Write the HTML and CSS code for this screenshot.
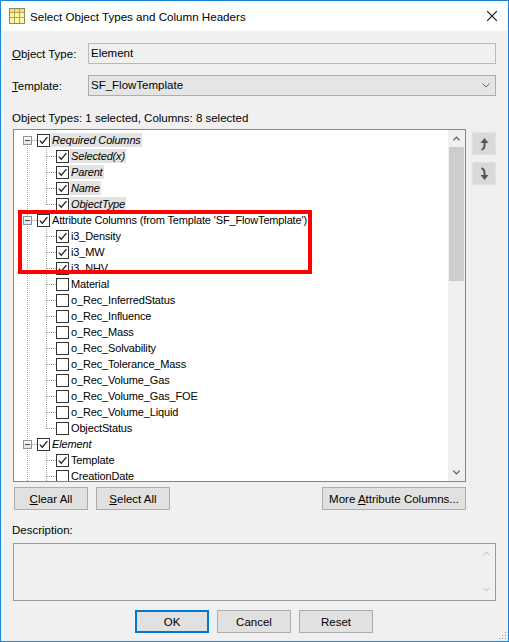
FILE: index.html
```html
<!DOCTYPE html>
<html>

<head>
    <title>Select Object Types and Column Headers</title>
    <link rel="stylesheet" href="styles.css">
</head>

<body>

    <svg class="defs" width="0" height="0">
        <symbol id="tick" viewBox="0 0 11 11">
            <path d="M1.8 5.6 L4.3 8.2 L9.4 2.2" fill="none" stroke="#222" stroke-width="1.3" />
        </symbol>
    </svg>

    <div class="window">
        <div class="titlebar">
            <svg class="app-icon" viewBox="0 0 16 16">
                <rect x="0.5" y="0.5" width="15" height="15" fill="#fff7a4" stroke="#8d8a6a" />
                <rect x="1" y="1" width="14" height="3.5" fill="#f3e27c" />
                <path d="M5.5 1v14M10.5 1v14M1 4.5h14M1 9.5h14" stroke="#b3a45c" stroke-width="1" />
            </svg>
            <span class="title">Select Object Types and Column Headers</span>
            <svg class="close" viewBox="0 0 10 10">
                <path d="M0 0L10 10M10 0L0 10" stroke="#111" stroke-width="1.1" />
            </svg>
        </div>

        <div class="content">
            <div class="field first">
                <label><u>O</u>bject Type:</label>
                <div class="textbox">Element</div>
            </div>
            <div class="field">
                <label><u>T</u>emplate:</label>
                <div class="combo">
                    <span>SF_FlowTemplate</span>
                    <svg class="chev" viewBox="0 0 8 5"><path d="M0.5 0.5L4 4L7.5 0.5" fill="none" stroke="#606060" /></svg>
                </div>
            </div>

            <div class="caption">Object Types: 1 selected, Columns: 8 selected</div>

            <div class="tree-area">
                <div class="tree">
                    <ul class="nodes">
                        <li class="row">
                            <span class="cell root top"><i class="expander"></i></span>
                            <i class="cb"><svg><use href="#tick" /></svg></i>
                            <span class="label grey">Required Columns</span>
                        </li>
                        <li class="row">
                            <span class="cell line"></span><span class="cell branch"></span>
                            <i class="cb"><svg><use href="#tick" /></svg></i>
                            <span class="label grey">Selected(x)</span>
                        </li>
                        <li class="row">
                            <span class="cell line"></span><span class="cell branch"></span>
                            <i class="cb"><svg><use href="#tick" /></svg></i>
                            <span class="label grey">Parent</span>
                        </li>
                        <li class="row">
                            <span class="cell line"></span><span class="cell branch"></span>
                            <i class="cb"><svg><use href="#tick" /></svg></i>
                            <span class="label grey">Name</span>
                        </li>
                        <li class="row">
                            <span class="cell line"></span><span class="cell branch last"></span>
                            <i class="cb"><svg><use href="#tick" /></svg></i>
                            <span class="label grey">ObjectType</span>
                        </li>

                        <li class="row">
                            <span class="cell root"><i class="expander"></i></span>
                            <i class="cb"><svg><use href="#tick" /></svg></i>
                            <span class="label">Attribute Columns (from Template 'SF_FlowTemplate')</span>
                        </li>
                        <li class="row">
                            <span class="cell line"></span><span class="cell branch"></span>
                            <i class="cb"><svg><use href="#tick" /></svg></i>
                            <span class="label">i3_Density</span>
                        </li>
                        <li class="row">
                            <span class="cell line"></span><span class="cell branch"></span>
                            <i class="cb"><svg><use href="#tick" /></svg></i>
                            <span class="label">i3_MW</span>
                        </li>
                        <li class="row">
                            <span class="cell line"></span><span class="cell branch"></span>
                            <i class="cb"><svg><use href="#tick" /></svg></i>
                            <span class="label">i3_NHV</span>
                        </li>
                        <li class="row">
                            <span class="cell line"></span><span class="cell branch"></span>
                            <i class="cb"></i><span class="label">Material</span>
                        </li>
                        <li class="row">
                            <span class="cell line"></span><span class="cell branch"></span>
                            <i class="cb"></i><span class="label">o_Rec_InferredStatus</span>
                        </li>
                        <li class="row">
                            <span class="cell line"></span><span class="cell branch"></span>
                            <i class="cb"></i><span class="label">o_Rec_Influence</span>
                        </li>
                        <li class="row">
                            <span class="cell line"></span><span class="cell branch"></span>
                            <i class="cb"></i><span class="label">o_Rec_Mass</span>
                        </li>
                        <li class="row">
                            <span class="cell line"></span><span class="cell branch"></span>
                            <i class="cb"></i><span class="label">o_Rec_Solvability</span>
                        </li>
                        <li class="row">
                            <span class="cell line"></span><span class="cell branch"></span>
                            <i class="cb"></i><span class="label">o_Rec_Tolerance_Mass</span>
                        </li>
                        <li class="row">
                            <span class="cell line"></span><span class="cell branch"></span>
                            <i class="cb"></i><span class="label">o_Rec_Volume_Gas</span>
                        </li>
                        <li class="row">
                            <span class="cell line"></span><span class="cell branch"></span>
                            <i class="cb"></i><span class="label">o_Rec_Volume_Gas_FOE</span>
                        </li>
                        <li class="row">
                            <span class="cell line"></span><span class="cell branch"></span>
                            <i class="cb"></i><span class="label">o_Rec_Volume_Liquid</span>
                        </li>
                        <li class="row">
                            <span class="cell line"></span><span class="cell branch last"></span>
                            <i class="cb"></i><span class="label">ObjectStatus</span>
                        </li>

                        <li class="row">
                            <span class="cell root"><i class="expander"></i></span>
                            <i class="cb"><svg><use href="#tick" /></svg></i>
                            <span class="label italic">Element</span>
                        </li>
                        <li class="row">
                            <span class="cell line"></span><span class="cell branch"></span>
                            <i class="cb"><svg><use href="#tick" /></svg></i>
                            <span class="label">Template</span>
                        </li>
                        <li class="row">
                            <span class="cell line"></span><span class="cell branch"></span>
                            <i class="cb"></i><span class="label">CreationDate</span>
                        </li>
                        <li class="row">
                            <span class="cell line"></span><span class="cell branch"></span>
                            <i class="cb"></i><span class="label">CreationUser</span>
                        </li>
                    </ul>

                    <div class="vscroll">
                        <div class="sb-btn">
                            <svg viewBox="0 0 8 5"><path d="M0.5 4.5L4 1L7.5 4.5" fill="none" stroke="#606060" stroke-width="1.4" /></svg>
                        </div>
                        <div class="sb-thumb"></div>
                        <div class="sb-track"></div>
                        <div class="sb-btn">
                            <svg viewBox="0 0 8 5"><path d="M0.5 0.5L4 4L7.5 0.5" fill="none" stroke="#606060" stroke-width="1.4" /></svg>
                        </div>
                    </div>

                    <div class="mark"></div>
                </div>

                <div class="movers">
                    <button type="button">
                        <svg viewBox="0 0 14 14">
                            <path d="M7.5 1L11.5 6H3.5Z" fill="#555" />
                            <path d="M7.5 5.5V8.5Q7.5 11.5 4.5 12.8" fill="none" stroke="#555" stroke-width="2" />
                        </svg>
                    </button>
                    <button type="button">
                        <svg viewBox="0 0 14 14">
                            <path d="M4.5 1.2Q7.5 2.5 7.5 5.5V8.5" fill="none" stroke="#555" stroke-width="2" />
                            <path d="M7.5 13L11.5 8H3.5Z" fill="#555" />
                        </svg>
                    </button>
                </div>
            </div>

            <div class="actions">
                <button type="button" class="btn"><u>C</u>lear All</button>
                <button type="button" class="btn"><u>S</u>elect All</button>
                <button type="button" class="btn wide">More <u>A</u>ttribute Columns...</button>
            </div>

            <div class="caption desc-label">Description:</div>
            <div class="desc">
                <div class="desc-scroll">
                    <svg viewBox="0 0 8 5"><path d="M0.5 4.5L4 1L7.5 4.5" fill="none" stroke="#c4c4c4" stroke-width="1.2" /></svg>
                    <svg viewBox="0 0 8 5"><path d="M0.5 0.5L4 4L7.5 0.5" fill="none" stroke="#c4c4c4" stroke-width="1.2" /></svg>
                </div>
            </div>

            <div class="footer">
                <button type="button" class="btn default">OK</button>
                <button type="button" class="btn">Cancel</button>
                <button type="button" class="btn">Reset</button>
            </div>
        </div>

        <svg class="grip" viewBox="0 0 10 10">
            <rect x="8" y="2" width="1" height="1" fill="#9a9a9a" />
            <rect x="5" y="5" width="1" height="1" fill="#9a9a9a" />
            <rect x="8" y="5" width="1" height="1" fill="#9a9a9a" />
            <rect x="2" y="8" width="1" height="1" fill="#9a9a9a" />
            <rect x="5" y="8" width="1" height="1" fill="#9a9a9a" />
            <rect x="8" y="8" width="1" height="1" fill="#9a9a9a" />
        </svg>
    </div>

</body>

</html>
```

FILE: styles.css
```css
* {
    margin: 0;
    padding: 0;
    box-sizing: border-box;
    list-style: none;
}

body {
    font-family: "Liberation Sans", Arial, sans-serif;
    font-size: 11.5px;
    color: #000;
    background: #fff;
}

u {
    text-decoration: underline;
    text-underline-offset: 1px;
}

.defs {
    position: absolute;
    width: 0;
    height: 0;
}

.window {
    position: relative;
    width: 509px;
    height: 642px;
    border: 1px solid #1a84d8;
    background: #f0f0f0;
    display: flex;
    flex-direction: column;
}

/* title bar */
.titlebar {
    height: 30px;
    background: #fff;
    display: flex;
    align-items: center;
    padding: 0 11px 0 8px;
}

.app-icon {
    width: 16px;
    height: 16px;
    margin-right: 5px;
}

.title {
    flex: 1;
    font-size: 11.6px;
}

.close {
    width: 10px;
    height: 10px;
}

.content {
    padding: 0 12px 0 11px;
}

/* top fields */
.field {
    display: flex;
    align-items: center;
    margin-top: 11px;
}

.field.first {
    margin-top: 12px;
}

.field label {
    width: 76px;
}

.textbox,
.combo {
    flex: 1;
    height: 21px;
    line-height: 19px;
    padding-left: 2px;
    border: 1px solid #b9b9b9;
    background: #f0f0f0;
}

.combo {
    display: flex;
    align-items: center;
    justify-content: space-between;
    padding-right: 5px;
    border-color: #adadad;
    background: #e5e5e5;
}

.chev {
    width: 8px;
    height: 5px;
}

.caption {
    margin-top: 15px;
    line-height: 15px;
}

/* tree with the up / down movers */
.tree-area {
    display: flex;
    margin-top: 3px;
    margin-left: 1px;
}

.tree {
    position: relative;
    display: flex;
    width: 453px;
    height: 353px;
    border: 1px solid #828790;
    background: #fff;
}

.nodes {
    flex: 1;
    overflow: hidden;
    padding: 2px 0 0 4px;
    font-size: 11px;
    letter-spacing: -0.15px;
}

.row {
    display: flex;
    align-items: center;
    height: 16px;
    white-space: nowrap;
}

.cell {
    width: 19px;
    height: 16px;
    flex: none;
    display: flex;
    align-items: center;
    --dots-v: repeating-linear-gradient(to bottom, #a0a0a0 0 1px, transparent 1px 2px);
    --dots-h: repeating-linear-gradient(to right, #a0a0a0 0 1px, transparent 1px 2px);
}

.cell.line {
    background: var(--dots-v) no-repeat 9px 0 / 1px 16px;
}

.cell.branch {
    background:
        var(--dots-v) no-repeat 9px 0 / 1px 16px,
        var(--dots-h) no-repeat 10px 8px / 9px 1px;
}

.cell.branch.last {
    background:
        var(--dots-v) no-repeat 9px 0 / 1px 9px,
        var(--dots-h) no-repeat 10px 8px / 9px 1px;
}

.cell.root {
    background:
        var(--dots-v) no-repeat 9px 0 / 1px 16px,
        var(--dots-h) no-repeat 14px 8px / 5px 1px;
}

.cell.root.top {
    background:
        var(--dots-v) no-repeat 9px 8px / 1px 8px,
        var(--dots-h) no-repeat 14px 8px / 5px 1px;
}

.expander {
    position: relative;
    width: 9px;
    height: 9px;
    margin-left: 5px;
    border: 1px solid #919191;
    background: linear-gradient(#fff, #e2e2e2);
}

.expander::after {
    content: "";
    position: absolute;
    left: 1px;
    top: 3px;
    width: 5px;
    height: 1px;
    background: #2e4a7a;
}

.cb {
    flex: none;
    width: 13px;
    height: 13px;
    border: 1px solid #333;
    background: #fff;
    display: flex;
}

.cb svg {
    width: 11px;
    height: 11px;
}

.label {
    margin-left: 1px;
    padding: 0 1px;
    line-height: 14px;
}

.label.grey {
    font-style: italic;
    background: #e3e3e3;
}

.label.italic {
    font-style: italic;
}

.vscroll {
    width: 17px;
    flex: none;
    display: flex;
    flex-direction: column;
    background: #f0f0f0;
}

.sb-btn {
    height: 17px;
    display: flex;
    align-items: center;
    justify-content: center;
}

.sb-btn svg {
    width: 7px;
    height: 5px;
}

.sb-thumb {
    height: 134px;
    margin: 0 1px;
    background: #cdcdcd;
}

.sb-track {
    flex: 1;
}

/* red frame drawn over the attribute columns */
.mark {
    position: absolute;
    left: 4px;
    top: 80px;
    width: 294px;
    height: 64px;
    border: 4px solid #ff0000;
}

.movers {
    display: flex;
    flex-direction: column;
    gap: 7px;
    margin: 3px 0 0 6px;
}

.movers button {
    width: 24px;
    height: 23px;
    border: 1px solid #e3e3e3;
    background: #d9d9d9;
    display: flex;
    align-items: center;
    justify-content: center;
}

.movers svg {
    width: 14px;
    height: 14px;
}

/* buttons */
.btn {
    height: 23px;
    width: 74px;
    border: 1px solid #adadad;
    background: #e1e1e1;
    font-family: inherit;
    font-size: 11.5px;
    color: #000;
}

.btn.wide {
    width: 144px;
    margin-left: auto;
}

.btn.default {
    border: 2px solid #0078d7;
}

.actions {
    display: flex;
    gap: 8px;
    width: 452px;
    margin: 5px 0 0 2px;
}

.desc-label {
    margin-top: 13px;
}

.desc {
    display: flex;
    justify-content: flex-end;
    height: 58px;
    margin: 5px 0 0 1px;
    border: 1px solid #9a9a9a;
    background: #f0f0f0;
}

.desc-scroll {
    width: 17px;
    display: flex;
    flex-direction: column;
    align-items: center;
    justify-content: space-between;
    padding: 7px 0 8px;
}

.desc-scroll svg {
    width: 7px;
    height: 5px;
}

.footer {
    display: flex;
    justify-content: center;
    gap: 8px;
    margin-top: 9px;
}

.grip {
    position: absolute;
    right: 1px;
    bottom: 1px;
    width: 10px;
    height: 10px;
}
```
